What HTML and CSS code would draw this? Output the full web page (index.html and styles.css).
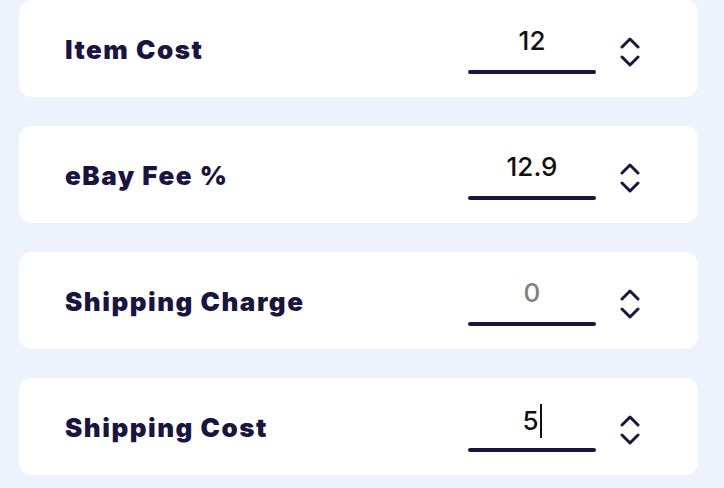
FILE: index.html
```html
<!DOCTYPE html>
<html>

<head>
  <meta charset="utf-8">
  <meta name="viewport" content="width=device-width, initial-scale=1.0">
  <link rel="stylesheet" href="styles.css">
</head>

<body>
  <div id="calc">
    <div class="row">
      <div class="label">Item Cost</div>
      <div class="field"><span class="value">12</span></div>
      <svg class="stepper" width="20" height="30" viewBox="0 0 20 30"><path d="M2 10 L10 2 L18 10 M2 20 L10 28 L18 20" /></svg>
    </div>
    <div class="row">
      <div class="label">eBay Fee %</div>
      <div class="field"><span class="value">12.9</span></div>
      <svg class="stepper" width="20" height="30" viewBox="0 0 20 30"><path d="M2 10 L10 2 L18 10 M2 20 L10 28 L18 20" /></svg>
    </div>
    <div class="row">
      <div class="label">Shipping Charge</div>
      <div class="field"><span class="value empty">0</span></div>
      <svg class="stepper" width="20" height="30" viewBox="0 0 20 30"><path d="M2 10 L10 2 L18 10 M2 20 L10 28 L18 20" /></svg>
    </div>
    <div class="row">
      <div class="label">Shipping Cost</div>
      <div class="field"><span class="value">5<span class="caret"></span></span></div>
      <svg class="stepper" width="20" height="30" viewBox="0 0 20 30"><path d="M2 10 L10 2 L18 10 M2 20 L10 28 L18 20" /></svg>
    </div>
  </div>
</body>

</html>
```

FILE: styles.css
```css
html,
body {
  margin: 0;
  height: 100%;
  background-color: #edf3fd;
}

body {
  overflow: hidden;
}

#calc {
  width: 679px;
  margin: 0 0 0 19px;
  display: flex;
  flex-direction: column;
  gap: 29px;
}

.row {
  height: 97px;
  box-sizing: border-box;
  background-color: #fff;
  border-radius: 13px;
  display: flex;
  align-items: center;
  padding: 0 58px 0 46px;
}

.label {
  flex-grow: 1;
  font-family: "Inter", sans-serif;
  font-weight: 900;
  font-size: 26px;
  letter-spacing: 1.5px;
  color: #1b1340;
  margin-top: 1px;
}

.field {
  width: 128px;
  height: 48px;
  position: relative;
  display: flex;
  justify-content: center;
  align-items: flex-start;
  margin-top: 2px;
}

.field::after {
  content: "";
  position: absolute;
  left: 0;
  right: 0;
  bottom: 0;
  height: 4px;
  border-radius: 2px;
  background-color: #1b1340;
}

.value {
  font-family: "Inter", sans-serif;
  font-weight: 500;
  font-size: 26px;
  line-height: 30px;
  color: #111;
  display: flex;
  align-items: center;
}

.value.empty {
  color: #808080;
}

.caret {
  width: 2px;
  height: 34px;
  margin-left: 1px;
  background-color: #111;
}

.stepper {
  margin-left: 24px;
  margin-top: 7px;
}

.stepper path {
  fill: none;
  stroke: #1b1340;
  stroke-width: 3;
  stroke-linecap: round;
  stroke-linejoin: round;
}
```
